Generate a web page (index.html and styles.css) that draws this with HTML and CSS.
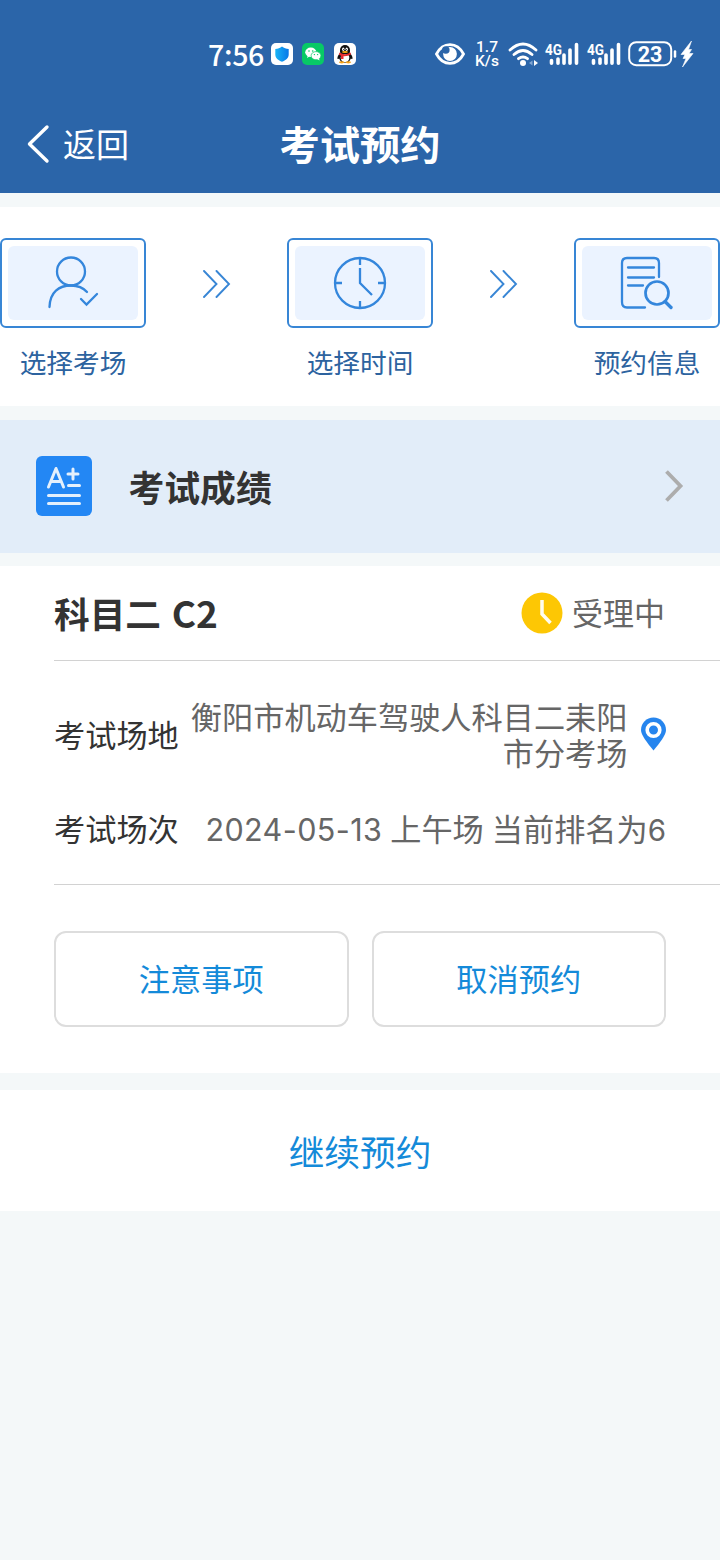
FILE: index.html
```html
<!DOCTYPE html>
<html lang="zh-CN">
<head>
<meta charset="utf-8">
<title>考试预约</title>
<link rel="stylesheet" href="styles.css">
</head>
<body>
<header class="header">
  <div class="status">
    <div class="status-left">
      <span class="clock">7:56</span>
      <svg class="app" viewBox="0 0 22 22"><defs><linearGradient id="sh"><stop offset="0" stop-color="#19b4f5"/><stop offset="1" stop-color="#0878e8"/></linearGradient></defs><rect width="22" height="22" rx="5" fill="#fff"/><path d="M11 3.500C9 5 7 5.800 4.300 6v5.500c0 3.500 3 5.800 6.700 7.300 3.700-1.500 6.700-3.800 6.700-7.300V6C15 5.800 13 5 11 3.500z" fill="url(#sh)"/></svg>
      <svg class="app" viewBox="0 0 22 22"><rect width="22" height="22" rx="5" fill="#08c966"/><path d="M5 15l.7-2.200h3z" fill="#fff"/><ellipse cx="8.800" cy="9.300" rx="5.600" ry="4.700" fill="#fff"/><ellipse cx="14" cy="12.700" rx="4.900" ry="4.100" fill="#fff" stroke="#08c966" stroke-width=".7"/><path d="M15 16l2.500 1.500-.5-2.500z" fill="#fff"/><g fill="#08c966"><circle cx="7" cy="8" r=".8"/><circle cx="10.700" cy="8" r=".8"/><circle cx="12.400" cy="11.600" r=".7"/><circle cx="15.600" cy="11.600" r=".7"/></g></svg>
      <svg class="app" viewBox="0 0 22 22"><rect width="22" height="22" rx="5" fill="#fff"/><path d="M6 10C2.500 14 3 17.500 5 15.500h12c2 2 2.500-1.500-1-5.500z" fill="#111"/><ellipse cx="11" cy="14.300" rx="6" ry="5.700" fill="#111"/><ellipse cx="11" cy="14.700" rx="4.300" ry="4.700" fill="#fff"/><path d="M6 9V7a5 5 0 0 1 10 0v2c0 3-10 3-10 0z" fill="#111"/><ellipse cx="9.300" cy="6.200" rx="1.200" ry="1.700" fill="#fff"/><ellipse cx="12.700" cy="6.200" rx="1.200" ry="1.700" fill="#fff"/><circle cx="9.600" cy="6.400" r=".5"/><circle cx="12.400" cy="6.400" r=".5"/><ellipse cx="11" cy="9" rx="3" ry="1" fill="#ffad13"/><path d="M5.500 9.500q5.500 3.500 11 0l.5 2q-3.500 2-7.500 1.700V16H7v-3.300l-2-1z" fill="#e52b30"/><ellipse cx="7.700" cy="19.300" rx="2.800" ry="1.100" fill="#f9a51b"/><ellipse cx="14.300" cy="19.300" rx="2.800" ry="1.100" fill="#f9a51b"/></svg>
    </div>
    <div class="status-right">
      <svg class="eye" viewBox="0 0 30 22"><path d="M1.500 11C8-1.500 22-1.500 28.500 11 22 23.500 8 23.500 1.500 11z" fill="none" stroke="#fff" stroke-width="2.800"/><circle cx="15" cy="11" r="6.900" fill="#fff"/><circle cx="10.800" cy="7" r="3.800" fill="#2b65a9"/></svg>
      <span class="speed"><span class="speed-line">1.7</span><span class="speed-line">K/s</span></span>
      <svg class="wifi" viewBox="0 0 31 26"><g fill="none" stroke="#fff" stroke-width="2.800" stroke-linecap="round"><path d="M2 9q13-12 26 0M6 13.500q9-8 18 0M10.500 17.700q4.500-3.500 9 0"/></g><circle cx="15" cy="22" r="3" fill="#fff"/><path d="M24.500 19.500v5l-3.500-2.500z" fill="#80a5d2"/><path d="M26 19v6l4-3z" fill="#fff"/></svg>
      <svg class="signal" viewBox="0 0 34 24"><text class="net" x="0" y="12.500" textLength="17" lengthAdjust="spacingAndGlyphs">4G</text><g stroke="#fff" stroke-width="3.600" stroke-linecap="round"><path d="M6.500 18.500v2.700M13 17v4.200M19 13v8.200M25 8v13.200M31.500 2.500v18.700"/></g></svg>
      <svg class="signal signal-second" viewBox="0 0 34 24"><text class="net" x="0" y="12.500" textLength="17" lengthAdjust="spacingAndGlyphs">4G</text><g stroke="#fff" stroke-width="3.600" stroke-linecap="round"><path d="M6.500 18.500v2.700M13 17v4.200M19 13v8.200M25 8v13.200M31.500 2.500v18.700"/></g></svg>
      <svg class="battery" viewBox="0 0 66 26"><rect x="1.200" y="1.200" width="42" height="23" rx="7" fill="none" stroke="#fff" stroke-width="2"/><text class="percent" x="22" y="20.500">23</text><path d="M47 10.500v5" stroke="#fff" stroke-width="2.500" stroke-linecap="round"/><path d="M63.500 0L53 13.500h4l-2 4h3L54.500 26 65 12.500h-4l2.500-4H60.500z" fill="#fff" stroke="#fff" stroke-width=".6"/></svg>
    </div>
  </div>
  <nav class="nav">
    <a class="back"><svg class="back-icon" viewBox="0 0 22 38"><path d="M20 3L2.500 20 20 37" fill="none" stroke="#fff" stroke-width="3.400" stroke-linecap="round" stroke-linejoin="round"/></svg>返回</a>
    <h1 class="title">考试预约</h1>
  </nav>
</header>

<main>
  <section class="steps">
    <div class="step">
      <div class="step-box"><svg class="step-icon" viewBox="0 0 130 74"><circle cx="63" cy="25.500" r="14"/><path d="M41.500 61C42 46 51 39.500 63 39.500c6 0 12 2 16 6.500" stroke-linecap="round"/><path d="M73 53l5.500 5.500L89 48" stroke-linecap="round"/></svg></div>
      <span class="step-label">选择考场</span>
    </div>
    <svg class="arrows" viewBox="0 0 28 28"><path d="M1 1L13.500 14 1 27M13.500 1L26 14 13.500 27"/></svg>
    <div class="step">
      <div class="step-box"><svg class="step-icon" viewBox="0 0 130 74"><circle cx="65" cy="37" r="25"/><path d="M65 12v7M65 55v7M40 37h7M83 37h7M65 22v15l12 12"/></svg></div>
      <span class="step-label">选择时间</span>
    </div>
    <svg class="arrows" viewBox="0 0 28 28"><path d="M1 1L13.500 14 1 27M13.500 1L26 14 13.500 27"/></svg>
    <div class="step">
      <div class="step-box"><svg class="step-icon" viewBox="0 0 130 74"><path d="M77 31V17q0-5-5-5H45q-5 0-5 5v39q0 5.500 5 5.500h18M46 21.500h26M46 31.500h26M46 39.500h15" stroke-linecap="round"/><circle cx="75" cy="47" r="11.500" stroke-width="2.700"/><path d="M83 55.500l6 6" stroke-width="3.400" stroke-linecap="round"/></svg></div>
      <span class="step-label">预约信息</span>
    </div>
  </section>

  <section class="score">
    <svg class="score-icon" viewBox="0 0 56 60"><rect width="56" height="60" rx="6" fill="#2387f4"/><g fill="none" stroke="#e4f0fc" stroke-width="3" stroke-linecap="round" stroke-linejoin="round"><path d="M12.500 31l7.500-18.500L27.500 31M15 25.500h10M32 18h10M37 13v10M32.500 29.500h11M12.500 39.500h31M12.500 47.500h31"/></g></svg>
    <span class="score-title">考试成绩</span>
    <svg class="chevron" viewBox="0 0 20 34"><path d="M2.500 2.500L16.500 17 2.500 31.500" fill="none" stroke="#adadad" stroke-width="3.800"/></svg>
  </section>

  <section class="card">
    <div class="card-head">
      <h2 class="subject">科目二 <span class="class-code">C2</span></h2>
      <svg class="state-icon" viewBox="0 0 42 42"><circle cx="21" cy="21" r="20.500" fill="#fdc704"/><path d="M21 8v14l8.500 9" fill="none" stroke="#fffdf0" stroke-width="3.500"/></svg>
      <span class="state">受理中</span>
    </div>
    <div class="details">
      <div class="row place">
        <span class="key">考试场地</span>
        <span class="value place-value">衡阳市机动车驾驶人科目二耒阳市分考场</span>
        <svg class="pin" viewBox="0 0 26 34"><path d="M13.500 .5C6.500 .5 1 6 1 13c0 5 6 12.500 12.500 20.500C20 25.500 26 18 26 13 26 6 20.500 .5 13.500 .5z" fill="#2685ee"/><circle cx="13.500" cy="13" r="6.300" fill="#2685ee" stroke="#fff" stroke-width="3.600"/></svg>
      </div>
      <div class="row session">
        <span class="key">考试场次</span>
        <span class="value"><span class="date">2024-05-13</span> 上午场 当前排名为<span class="rank">6</span></span>
      </div>
    </div>
    <div class="actions">
      <button class="btn">注意事项</button>
      <button class="btn">取消预约</button>
    </div>
  </section>

  <a class="continue">继续预约</a>
</main>
</body>
</html>
```
FILE: styles.css
```css
* { box-sizing: border-box; }
body {
  margin: 0;
  min-height: 1560px;
  background: #f4f8f9;
  color: #333;
  font-family: "Noto Sans CJK SC", sans-serif;
}
svg { display: block; flex: none; }
h1, h2 { margin: 0; }

.header { height: 193px; background: #2b65a9; color: #fff; }
.status { display: flex; justify-content: space-between; height: 96px; padding: 12px 26px 0 208px; }
.status-left, .status-right { display: flex; align-items: center; height: 84px; }
.clock { width: 62.500px; font-size: 28.500px; font-weight: 500; line-height: 40px; letter-spacing: -.3px; white-space: nowrap; }
.app { width: 22px; height: 22px; margin-right: 9.500px; }
.eye { width: 30px; height: 22px; }
.speed { display: flex; flex-direction: column; width: 24px; margin-left: 10px; font: 500 15.500px/14.500px Roboto, sans-serif; text-align: center; }
.speed-line { height: 14.500px; }
.wifi { width: 31px; height: 26px; margin-left: 9px; }
.signal { width: 34px; height: 24px; margin-left: 6px; overflow: visible; }
.signal-second { margin-left: 8px; }
.net { fill: #fff; font: 700 15px Roboto, sans-serif; }
.battery { width: 66px; height: 26px; margin-left: 7px; overflow: visible; }
.percent { fill: #fff; font: 700 21.500px Roboto, sans-serif; text-anchor: middle; }

.nav { display: grid; grid-template-columns: 1fr auto 1fr; align-items: center; height: 93px; }
.back { display: flex; align-items: center; gap: 14px; padding-left: 27px; font-size: 33px; line-height: 48px; }
.back-icon { width: 22px; height: 38px; overflow: visible; }
.title { font-size: 40.300px; line-height: 58px; font-weight: 700; }

.steps { display: flex; justify-content: space-between; height: 199px; margin-top: 14px; padding-top: 31px; background: #fff; }
.step { display: flex; flex-direction: column; align-items: center; width: 146px; }
.step-box { width: 146px; height: 90px; padding: 6px; border: 2px solid #3886d5; border-radius: 6px; }
.step-icon { width: 130px; height: 74px; border-radius: 6px; background: #ebf3ff; fill: none; stroke: #3486dc; stroke-width: 2.300; }
.step-label { margin-top: 14px; font-size: 26.700px; line-height: 39px; color: #2d639f; }
.arrows { width: 28px; height: 28px; margin-top: 32px; fill: none; stroke: #3886d5; stroke-width: 1.900; stroke-linecap: round; }

.score { display: flex; align-items: center; height: 133px; margin-top: 14px; padding: 0 36px 1px; background: #e2edf9; }
.score-icon { width: 56px; height: 60px; }
.score-title { flex: 1; margin-left: 36.500px; font-size: 35.800px; line-height: 52px; font-weight: 700; }
.chevron { width: 20px; height: 34px; }

.card { height: 507px; margin-top: 13px; padding-left: 54px; background: #fff; }
.card-head { display: flex; align-items: center; height: 95px; padding-right: 55px; border-bottom: 1px solid #d2d2d2; }
.subject { flex: 1; font-size: 35.700px; line-height: 52px; font-weight: 700; }
.class-code { margin-left: 2.500px; font-size: 37px; line-height: 1; }
.state-icon { width: 42px; height: 42px; }
.state { margin-left: 9px; padding-bottom: 3px; font-size: 31px; line-height: 45px; color: #666; }
.details { height: 224px; padding: 36px 54px 0 0; border-bottom: 1px solid #d2d2d2; }
.row { display: flex; align-items: center; justify-content: space-between; font-size: 31.200px; line-height: 36px; }
.key { flex: none; white-space: nowrap; }
.value { color: #666; text-align: right; white-space: nowrap; }
.place { height: 74px; }
.place-value { flex: 1; margin: 0 12.500px 0 8px; white-space: normal; }
.pin { width: 26px; height: 34px; }
.session { height: 36px; margin-top: 39px; }
.session .value { word-spacing: 1px; }
.date, .rank { font-family: Inter, sans-serif; font-size: 30.500px; line-height: 1; }
.date { letter-spacing: .4px; }
.rank { font-size: 29.500px; }
.actions { display: flex; gap: 23px; padding: 46px 54px 0 0; }
.btn { flex: 1; height: 96px; padding: 0 0 3px; border: 2px solid #ddd; border-radius: 12px; background: #fff; color: #148ad9; font: 400 31.200px "Noto Sans CJK SC", sans-serif; }

.continue { display: flex; align-items: center; justify-content: center; height: 121px; margin-top: 17px; background: #fff; color: #148ad9; font-size: 35.700px; line-height: 52px; }
```
